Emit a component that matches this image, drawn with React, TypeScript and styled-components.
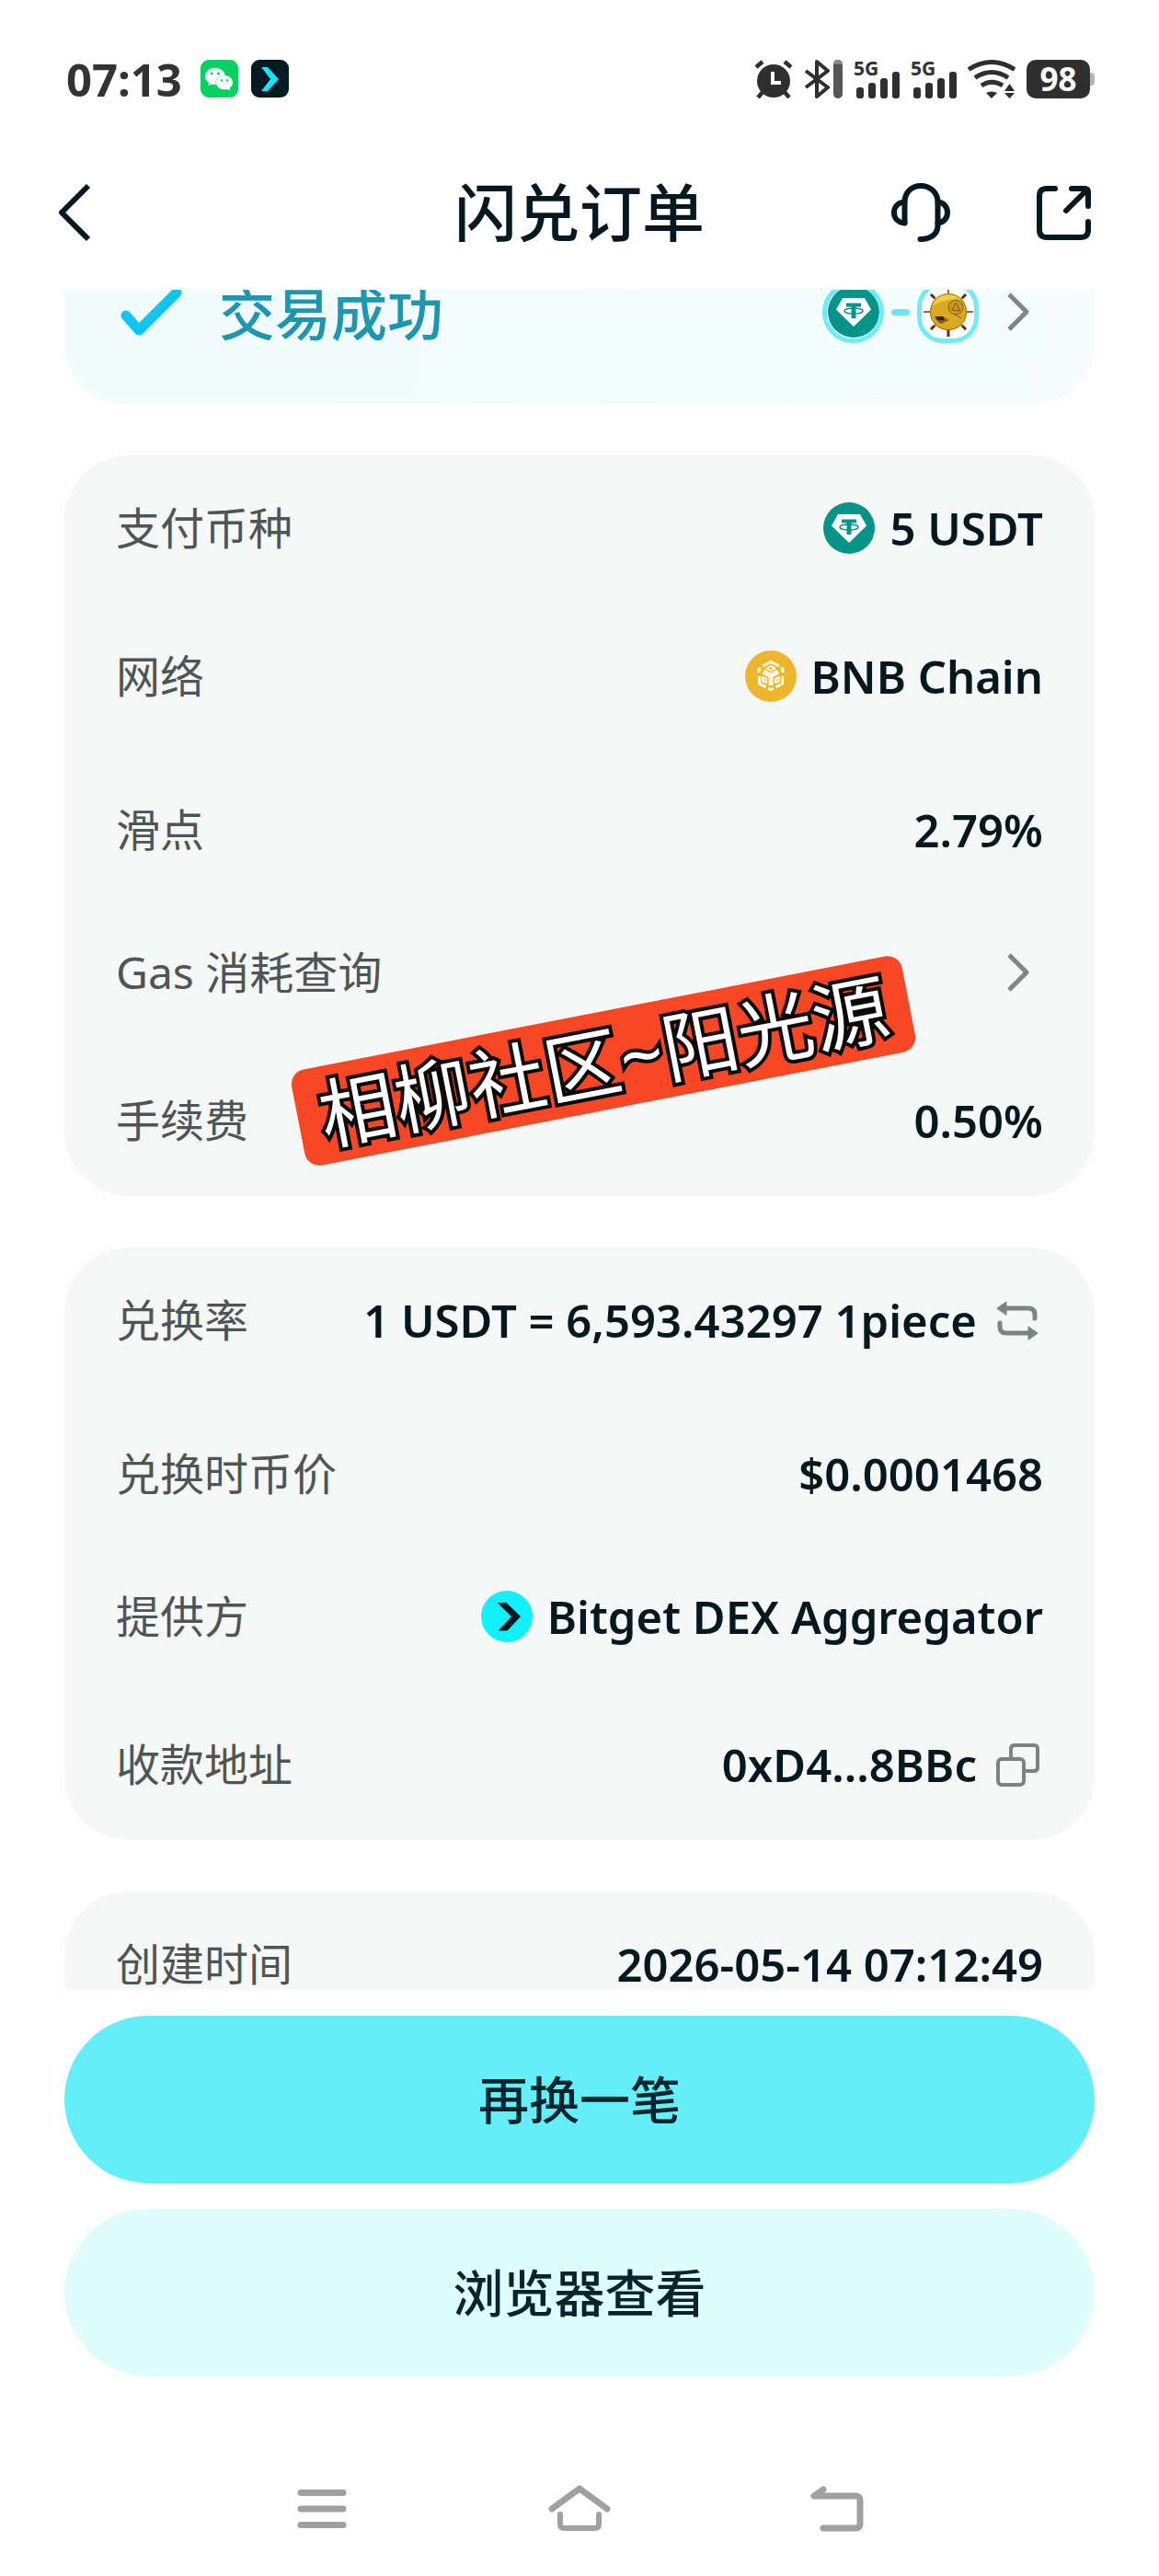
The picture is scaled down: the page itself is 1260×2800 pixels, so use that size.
import React from "react";
import styled, { createGlobalStyle, css } from "styled-components";
import { SiWechat } from "react-icons/si";

const GlobalStyle = createGlobalStyle`
  *, *::before, *::after { box-sizing: border-box; }
  body {
    margin: 0;
    background: #fefefe;
    color: #04191f;
    font-family: "Noto Sans", "Noto Sans CJK SC", sans-serif;
  }
  svg { display: block; flex: none; }
`;

const Screen = styled.div`
  display: flex;
  flex-direction: column;
  height: 100vh;
  overflow: hidden;
`;

/* ---------- system status bar ---------- */

const StatusBar = styled.div`
  display: flex;
  align-items: center;
  justify-content: space-between;
  flex: none;
  height: 147px;
  padding: 24px 70px 0 72px;
  color: #333;
`;

const StatusGroup = styled.div<{ $gap: number }>`
  display: flex;
  align-items: center;
  gap: ${(p) => p.$gap}px;
`;

const Clock = styled.time`
  margin-right: 6px;
  font-size: 49px;
  line-height: 56px;
  font-weight: 700;
`;

const AppBadge = styled.span<{ $bg: string }>`
  display: grid;
  place-items: center;
  width: 41px;
  height: 41px;
  border-radius: 9px;
  background: ${(p) => p.$bg};
  color: #fff;
`;

const Signal = styled.span`
  display: grid;
  width: 50px;
  height: 42px;
`;

const SignalLabel = styled.span`
  grid-area: 1 / 1;
  font-size: 21px;
  line-height: 18px;
  font-weight: 700;
`;

const SignalBars = styled.svg`
  grid-area: 1 / 1;
`;

const Battery = styled.span`
  display: flex;
  align-items: center;
`;

const BatteryBody = styled.span`
  width: 69px;
  height: 42px;
  border-radius: 10px;
  background: #2f2f2f;
  color: #fff;
  font-size: 35px;
  line-height: 42px;
  font-weight: 700;
  text-align: center;
`;

const BatteryTip = styled.span`
  width: 5px;
  height: 14px;
  border-radius: 0 4px 4px 0;
  background: #b5b5b5;
`;

/* ---------- header ---------- */

const Header = styled.header`
  display: grid;
  grid-template-columns: 1fr auto 1fr;
  align-items: center;
  flex: none;
  height: 168px;
  padding: 0 56px;
`;

const Title = styled.h1`
  margin: 0;
  font-size: 68px;
  line-height: 80px;
  font-weight: 500;
`;

const HeaderActions = styled.div`
  display: flex;
  justify-content: flex-end;
  gap: 88px;
  padding-right: 18px;
`;

const IconButton = styled.button`
  justify-self: start;
  padding: 0;
  border: 0;
  background: none;
  color: inherit;
  cursor: pointer;
`;

/* ---------- order details ---------- */

const Details = styled.main`
  flex: 1;
  min-height: 0;
  padding: 0 70px;
  overflow: hidden;
`;

const CardList = styled.div`
  display: flex;
  flex-direction: column;
  gap: 56px;
  margin-top: -76px;
`;

const ResultCard = styled.section`
  display: flex;
  align-items: center;
  height: 200px;
  padding: 0 56px;
  border-radius: 66px;
  background: linear-gradient(100deg, #f1fcfd, #f4fcfe);
`;

const ResultText = styled.h2`
  flex: 1;
  margin: 0;
  padding: 6px 0 0 40px;
  color: #1f96b0;
  font-size: 61px;
  line-height: 60px;
  font-weight: 500;
`;

const TokenPair = styled.div`
  display: flex;
  align-items: center;
  gap: 8px;
  margin-right: 14px;
`;

const TokenRing = styled.span<{ $radius: number }>`
  display: grid;
  place-items: center;
  width: 67px;
  height: 67px;
  border: 5px solid #72ebf6;
  border-radius: ${(p) => p.$radius}px;
  background: #fff;
  overflow: hidden;
`;

const Dash = styled.span`
  width: 20px;
  height: 7px;
  border-radius: 4px;
  background: #6be6f1;
`;

const Card = styled.section`
  position: relative;
  padding: 0 56px;
  border-radius: 70px;
  background: #f6f8f8;
`;

const Rows = styled.dl`
  margin: 0;
`;

const RowBox = styled.div<{ $low?: boolean }>`
  display: flex;
  align-items: center;
  justify-content: space-between;
  height: 161px;
  padding-bottom: 4px;
  ${(p) =>
    p.$low &&
    css`
      padding-top: 12px;
    `}
`;

const Label = styled.dt`
  color: #4d5655;
  font-size: 48px;
  line-height: 64px;
`;

const Value = styled.dd`
  display: flex;
  align-items: center;
  gap: 16px;
  margin: 0;
  font-size: 49px;
  line-height: 64px;
  font-weight: 600;
`;

const Sticker = styled.div`
  position: absolute;
  top: 605px;
  left: 248px;
  padding: 0 24px;
  border-radius: 16px;
  background: #f74724;
  color: #fff;
  font-size: 83px;
  line-height: 106px;
  white-space: nowrap;
  -webkit-text-stroke: 8px #0a0a0a;
  paint-order: stroke fill;
  transform: rotate(-11deg);
`;

/* ---------- footer ---------- */

const Actions = styled.footer`
  display: flex;
  flex-direction: column;
  flex: none;
  gap: 28px;
  padding: 28px 70px 71px;
`;

const ActionButton = styled.button<{ $primary?: boolean }>`
  height: 182px;
  border: 0;
  border-radius: 91px;
  background: ${(p) => (p.$primary ? "#64eff8" : "#e0fdfe")};
  color: #04252e;
  font-family: inherit;
  font-size: 55px;
  line-height: 72px;
  font-weight: 500;
  cursor: pointer;
`;

const NavBar = styled.nav`
  display: flex;
  align-items: center;
  justify-content: center;
  flex: none;
  gap: 210px;
  height: 146px;
  color: #a0a0a0;
`;

/* ---------- icons ---------- */

const AlarmIcon = () => (
  <svg width="42" height="42" viewBox="0 0 42 42">
    <circle cx="21" cy="23" r="18" fill="#2f2f2f" />
    <path d="M2 8 9 2M40 8 33 2M4 41l6-7M38 41l-6-7" stroke="#2f2f2f" strokeWidth="4.5" fill="none" />
    <path d="M20 13v12h9" stroke="#fff" strokeWidth="4" fill="none" />
  </svg>
);

const BluetoothIcon = () => (
  <svg width="42" height="42" viewBox="0 0 42 42" fill="none">
    <path d="M2 12 26 30 14 40V2l12 10L2 30" stroke="#2f2f2f" strokeWidth="4" strokeLinejoin="round" />
    <rect x="32" width="10" height="42" rx="5" fill="#555" />
    <path d="M32 5a5 5 0 0 1 10 0Z" fill="#888" />
  </svg>
);

const SignalIcon = () => (
  <Signal>
    <SignalLabel>5G</SignalLabel>
    <SignalBars width="50" height="42" viewBox="0 0 50 42" fill="#2f2f2f">
      <rect x="3" y="30" width="8" height="12" rx="3" />
      <rect x="16" y="25" width="8" height="17" rx="3" />
      <rect x="29" y="20" width="8" height="22" rx="3" />
      <rect x="42" y="13" width="8" height="29" rx="3" />
    </SignalBars>
  </Signal>
);

const WifiIcon = () => (
  <svg width="52" height="42" viewBox="0 0 52 42" fill="none" stroke="#2f2f2f" strokeWidth="5">
    <path d="M1 10.500Q26-5.500 51 10.500M8 19.500Q26 7.500 44 19.500M15 28Q26 20.500 38 28" />
    <path d="M20 36q6-3 12 0l-6 6Z" fill="#2f2f2f" stroke="none" />
    <path d="m40 34 5.500-8 5.500 8ZM40 36l5.500 6 5.500-6Z" fill="#2f2f2f" stroke="none" />
  </svg>
);

const BackIcon = () => (
  <svg width="48" height="64" viewBox="0 0 48 64" fill="none" stroke="currentColor" strokeWidth="6">
    <path d="M40 3 11 32l29 29" strokeLinejoin="round" />
  </svg>
);

const SupportIcon = () => (
  <svg width="66" height="64" viewBox="0 0 66 64" fill="none" stroke="currentColor" strokeWidth="6" strokeLinecap="round" strokeLinejoin="round">
    <path d="M15.500 43V21C15.500 10 23 3 33 3s18.500 7 18.500 18v25c0 9-7 15-19 15" />
    <path d="M15.500 20.500C8 21 4 26 4 32s4 11 11.500 11.500M51.500 20.500C58 21 62 26 62 32s-4 11-10.500 11.500" />
  </svg>
);

const ShareIcon = () => (
  <svg width="64" height="64" viewBox="0 0 64 64" fill="none" stroke="currentColor" strokeWidth="6" strokeLinecap="round" strokeLinejoin="round">
    <path d="M25 6H16Q8 6 8 14v37q0 8 8 8h37q8 0 8-8V42" />
    <path d="M43 6h14q4 0 4 4v15M60 7 37 30" />
  </svg>
);

const CheckIcon = () => (
  <svg width="72" height="56" viewBox="0 0 72 56" fill="none">
    <path d="M11 32 25 48 66 7" stroke="#0fc5f2" strokeWidth="11" strokeLinecap="round" strokeLinejoin="round" />
  </svg>
);

const ChevronIcon = () => (
  <svg width="56" height="56" viewBox="0 0 56 56" fill="none">
    <path d="M19 9 38 28 19 47" stroke="#7f8786" strokeWidth="5" strokeLinejoin="round" />
  </svg>
);

const TetherIcon = () => (
  <svg width="56" height="56" viewBox="0 0 56 56">
    <circle cx="28" cy="28" r="28" fill="#069488" />
    <path d="M16 13h24l7 12.500L28 44 9 25.500Z" fill="#fff" />
    <path d="M20 18.500h16v4h-5.500V35h-5V22.500H20Z" fill="#069488" />
    <ellipse cx="28" cy="27" rx="10" ry="3" fill="none" stroke="#069488" strokeWidth="1.500" />
  </svg>
);

const BnbIcon = () => (
  <svg width="56" height="56" viewBox="0 0 56 56" fill="none">
    <circle cx="28" cy="28" r="28" fill="#edb62d" />
    <g stroke="#fffbe6" strokeWidth="3" strokeLinejoin="round">
      <path d="m19 17 9-4.500 9 4.500M15 24v-4l2-1M41 24v-4l-2-1M15.500 28v8l7 4M40.500 28v8l-7 4M25 41l3 1.500 3-1.500" />
      <path d="m23.500 19.500 4.500-2.500 4.500 2.500-4.500 2.500Z" strokeWidth="2" />
      <path d="m20 23 8 4.500 8-4.500M28 27.500V38" strokeWidth="5" />
      <path d="m19 29 4 2v4l-4-2ZM37 29l-4 2v4l4-2Z" strokeWidth="2" />
    </g>
  </svg>
);

const BitgetIcon = () => (
  <svg width="56" height="56" viewBox="0 0 56 56">
    <circle cx="28" cy="28" r="28" fill="#12effd" />
    <path d="M17.500 13h10L43 28 28.500 43.500h-10L33 28Z" fill="#04191f" />
  </svg>
);

const BitgetGlyph = () => (
  <svg width="22" height="28" viewBox="0 0 22 28">
    <path d="M2 1h7l12 13L9 27H2l10-13Z" fill="#12e6fa" />
  </svg>
);

const WheelCoinIcon = () => (
  <svg width="56" height="56" viewBox="0 0 56 56">
    <path d="M28 1v54M1 28h54M9 9l38 38M47 9 9 47" stroke="#a06a3c" strokeWidth="2" />
    <path d="M28 48v7M9 47l4-4M47 47l-4-4M9 9l4 4M47 9l-4 4" stroke="#5a3020" strokeWidth="3" />
    <circle cx="28" cy="28" r="20" fill="#d9a91f" />
    <path d="M10 22a19 19 0 0 1 33-7q-16-3-33 7Z" fill="#f0cd42" />
    <circle cx="36" cy="23" r="8" fill="#c99622" stroke="#8d6615" strokeWidth="1" />
    <path d="m32 26 4-8 5 9ZM34 30l8 5" fill="none" stroke="#7d5912" strokeWidth="1" />
    <path d="M13 33h9l7 4-9 4q-5-3-7-8Z" fill="#8a5a1c" />
    <path d="M14 33h9v4h-7Z" fill="#35200c" />
    <circle cx="28" cy="28" r="19.500" fill="none" stroke="#9b7118" strokeWidth="1" />
  </svg>
);

const SwapIcon = () => (
  <svg width="56" height="56" viewBox="0 0 56 56" fill="none" stroke="#7b8482" strokeWidth="5" strokeLinecap="round">
    <path d="M14 15h26q7 0 7 7v4M9 31v4q0 7 7 7h26" />
    <path d="m6 15 10-7v14ZM50 42l-10-7v14Z" fill="#7b8482" strokeWidth="1" strokeLinejoin="round" />
  </svg>
);

const CopyIcon = () => (
  <svg width="56" height="56" viewBox="0 0 56 56" fill="none" stroke="#7b8482" strokeWidth="4">
    <rect x="7" y="22" width="28" height="28" rx="4" />
    <path d="M21 22V11q0-4 4-4h21q4 0 4 4v20q0 4-4 4H35" />
  </svg>
);

const MenuIcon = () => (
  <svg width="70" height="56" viewBox="0 0 70 56" stroke="currentColor" strokeWidth="7" strokeLinecap="round">
    <path d="M12 10.500h46M12 28h46M12 45.500h46" />
  </svg>
);

const HomeIcon = () => (
  <svg width="70" height="56" viewBox="0 0 70 56" fill="none" stroke="currentColor" strokeWidth="7" strokeLinecap="round" strokeLinejoin="round">
    <path d="M5 28 35 6l30 22" />
    <path d="M14 34v11q0 4 4 4h34q4 0 4-4V34" strokeWidth="6" />
  </svg>
);

const ReturnIcon = () => (
  <svg width="70" height="56" viewBox="0 0 70 56" fill="none" stroke="currentColor" strokeWidth="7" strokeLinecap="round" strokeLinejoin="round">
    <path d="M20 7 10 14h45q5 0 5 5v25q0 5-5 5H20" />
  </svg>
);

/* ---------- page ---------- */

type RowProps = {
  label: string;
  low?: boolean;
  children?: React.ReactNode;
};

const Row = ({ label, low, children }: RowProps) => (
  <RowBox $low={low}>
    <Label>{label}</Label>
    <Value>{children}</Value>
  </RowBox>
);

export default function App() {
  return (
    <Screen lang="zh-CN">
      <GlobalStyle />
      <StatusBar>
        <StatusGroup $gap={14}>
          <Clock>07:13</Clock>
          <AppBadge $bg="#07d160">
            <SiWechat size={30} />
          </AppBadge>
          <AppBadge $bg="#021a20">
            <BitgetGlyph />
          </AppBadge>
        </StatusGroup>
        <StatusGroup $gap={12}>
          <AlarmIcon />
          <BluetoothIcon />
          <SignalIcon />
          <SignalIcon />
          <WifiIcon />
          <Battery>
            <BatteryBody>98</BatteryBody>
            <BatteryTip />
          </Battery>
        </StatusGroup>
      </StatusBar>

      <Header>
        <IconButton aria-label="返回">
          <BackIcon />
        </IconButton>
        <Title>闪兑订单</Title>
        <HeaderActions>
          <IconButton aria-label="客服">
            <SupportIcon />
          </IconButton>
          <IconButton aria-label="分享">
            <ShareIcon />
          </IconButton>
        </HeaderActions>
      </Header>

      <Details>
        <CardList>
          <ResultCard>
            <CheckIcon />
            <ResultText>交易成功</ResultText>
            <TokenPair>
              <TokenRing $radius={34}>
                <TetherIcon />
              </TokenRing>
              <Dash />
              <TokenRing $radius={28}>
                <WheelCoinIcon />
              </TokenRing>
            </TokenPair>
            <IconButton aria-label="查看详情">
              <ChevronIcon />
            </IconButton>
          </ResultCard>

          <Card>
            <Rows>
              <Row label="支付币种">
                <TetherIcon />5 USDT
              </Row>
              <Row label="网络">
                <BnbIcon />
                BNB Chain
              </Row>
              <Row label="滑点" low>
                2.79%
              </Row>
              <Row label="Gas 消耗查询">
                <IconButton aria-label="Gas 消耗查询">
                  <ChevronIcon />
                </IconButton>
              </Row>
              <Row label="手续费">0.50%</Row>
            </Rows>
            <Sticker>相柳社区~阳光源</Sticker>
          </Card>

          <Card>
            <Rows>
              <Row label="兑换率">
                1 USDT = 6,593.43297 1piece
                <IconButton aria-label="切换汇率">
                  <SwapIcon />
                </IconButton>
              </Row>
              <Row label="兑换时币价" low>
                $0.0001468
              </Row>
              <Row label="提供方">
                <BitgetIcon />
                Bitget DEX Aggregator
              </Row>
              <Row label="收款地址">
                0xD4...8BBc
                <IconButton aria-label="复制地址">
                  <CopyIcon />
                </IconButton>
              </Row>
            </Rows>
          </Card>

          <Card>
            <Rows>
              <Row label="创建时间">2026-05-14 07:12:49</Row>
            </Rows>
          </Card>
        </CardList>
      </Details>

      <Actions>
        <ActionButton $primary>再换一笔</ActionButton>
        <ActionButton>浏览器查看</ActionButton>
      </Actions>

      <NavBar>
        <IconButton aria-label="最近任务">
          <MenuIcon />
        </IconButton>
        <IconButton aria-label="主屏幕">
          <HomeIcon />
        </IconButton>
        <IconButton aria-label="后退">
          <ReturnIcon />
        </IconButton>
      </NavBar>
    </Screen>
  );
}
